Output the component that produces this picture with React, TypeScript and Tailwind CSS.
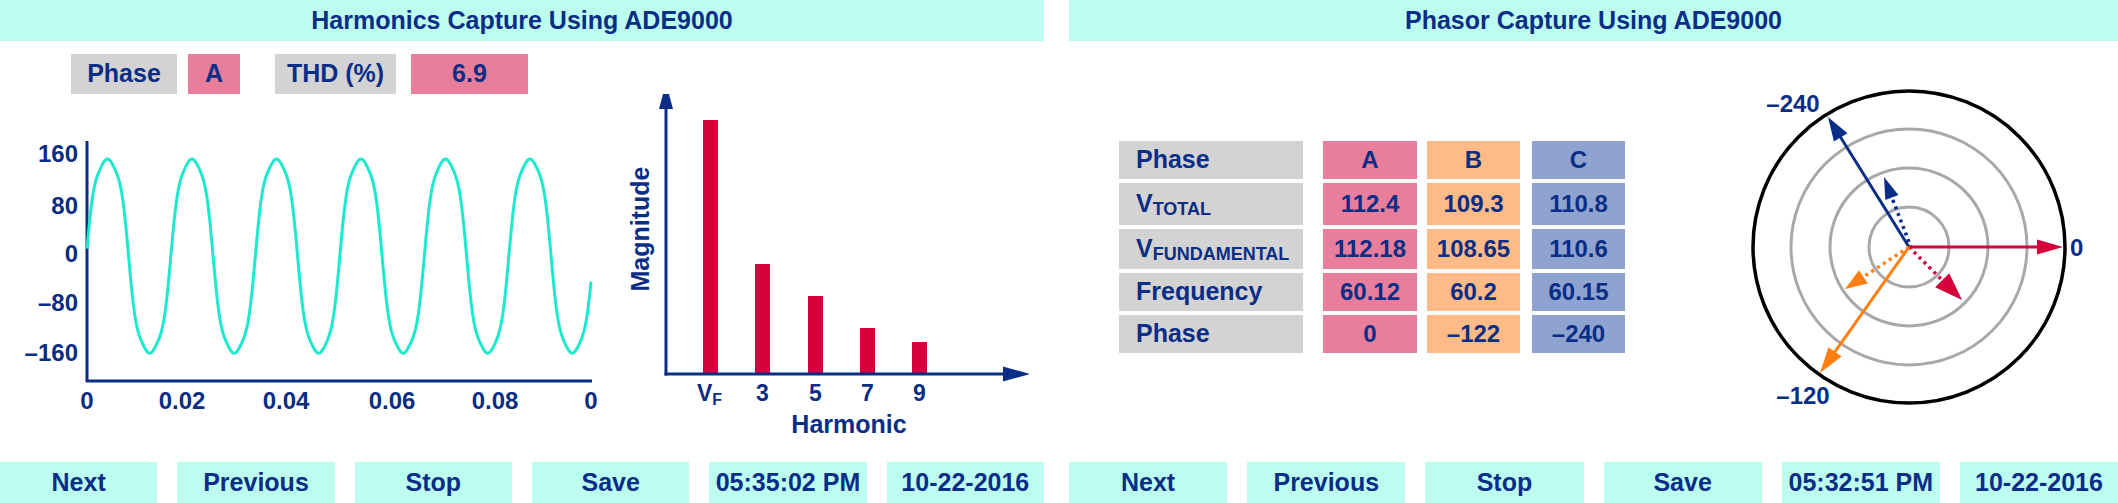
import React from "react";

const NAVY = "#0a2d86";

const buttons = (time: string) => ["Next", "Previous", "Stop", "Save", time, "10-22-2016"];

const ButtonBar: React.FC<{ time: string }> = ({ time }) => (
  <div className="flex h-[41px] gap-[20px]">
    {buttons(time).map((b) => (
      <div
        key={b}
        className="flex flex-1 items-center justify-center bg-[#bdfdef] text-[25px]"
      >
        {b}
      </div>
    ))}
  </div>
);

const Header: React.FC<{ title: string }> = ({ title }) => (
  <div className="flex h-[41px] items-center justify-center bg-[#bdfdef] text-[25px]">
    {title}
  </div>
);

// waveform: axis at x=87, zero at y=253
const wavePoints = () => {
  const pts: string[] = [];
  for (let x = 87; x <= 591; x += 1.5) {
    const t = (2 * Math.PI * (x - 87)) / 84.5 + 0.05;
    const v =
      168 * (Math.sin(t) + 0.1 * Math.sin(3 * t) + 0.03 * Math.sin(5 * t)) - 5;
    pts.push(`${x.toFixed(1)},${(253 - v * 0.622).toFixed(1)}`);
  }
  return pts.join(" ");
};

const WaveChart = () => (
  <svg width={610} height={368} viewBox="0 94 610 368" fill={NAVY}>
    <line x1={87} y1={141} x2={87} y2={382} stroke={NAVY} strokeWidth={3} />
    <line x1={86} y1={381} x2={592} y2={381} stroke={NAVY} strokeWidth={3} />
    <polyline
      points={wavePoints()}
      fill="none"
      stroke="#1de9cf"
      strokeWidth={3}
      strokeLinejoin="round"
    />
    {[
      ["160", 153],
      ["80", 205],
      ["0", 253],
      ["\u201380", 302],
      ["\u2013160", 352],
    ].map(([l, y]) => (
      <text
        key={l as string}
        x={78}
        y={(y as number) + 8.5}
        textAnchor="end"
        fontSize={24}
        fontWeight={700}
      >
        {l}
      </text>
    ))}
    {[
      ["0", 87],
      ["0.02", 182],
      ["0.04", 286],
      ["0.06", 392],
      ["0.08", 495],
      ["0", 591],
    ].map(([l, x], i) => (
      <text
        key={i}
        x={x as number}
        y={408.5}
        textAnchor="middle"
        fontSize={24}
        fontWeight={700}
      >
        {l}
      </text>
    ))}
  </svg>
);

const bars = [
  { x: 703, top: 120, label: "" },
  { x: 755, top: 264, label: "3" },
  { x: 808, top: 296, label: "5" },
  { x: 860, top: 328, label: "7" },
  { x: 912, top: 342, label: "9" },
];

const HarmonicChart = () => (
  <svg width={434} height={368} viewBox="610 94 434 368" fill={NAVY}>
    {bars.map((b) => (
      <rect key={b.x} x={b.x} y={b.top} width={15} height={374 - b.top} fill="#d7003b" />
    ))}
    <line x1={666} y1={106} x2={666} y2={375.5} stroke={NAVY} strokeWidth={3} />
    <polygon points="666,83 659,109 673,109" />
    <line x1={664.5} y1={374} x2={1006} y2={374} stroke={NAVY} strokeWidth={3} />
    <polygon points="1030,374 1003,366.5 1003,381.5" />
    <text x={697} y={401} fontSize={23} fontWeight={700}>
      V
      <tspan fontSize={16} dy={4}>
        F
      </tspan>
    </text>
    {bars.slice(1).map((b) => (
      <text
        key={b.label}
        x={b.x + 7.5}
        y={401}
        textAnchor="middle"
        fontSize={23}
        fontWeight={700}
      >
        {b.label}
      </text>
    ))}
    <text x={849} y={433} textAnchor="middle" fontSize={25} fontWeight={700}>
      Harmonic
    </text>
    <text
      x={0}
      y={0}
      textAnchor="middle"
      fontSize={25}
      fontWeight={700}
      transform="translate(649 229) rotate(-90)"
    >
      Magnitude
    </text>
  </svg>
);

const CX = 1909;
const CY = 247;

const Arrow: React.FC<{
  tx: number;
  ty: number;
  color: string;
  head: number;
  half: number;
  dotted?: boolean;
  ox?: number;
  oy?: number;
}> = ({ tx, ty, color, head, half, dotted, ox = CX, oy = CY }) => {
  const dx = tx - ox;
  const dy = ty - oy;
  const len = Math.hypot(dx, dy);
  const ux = dx / len;
  const uy = dy / len;
  const bx = tx - ux * head;
  const by = ty - uy * head;
  const px = -uy * half;
  const py = ux * half;
  return (
    <g>
      <line
        x1={ox}
        y1={oy}
        x2={bx + ux * 2}
        y2={by + uy * 2}
        stroke={color}
        strokeWidth={dotted ? 3.5 : 3}
        strokeDasharray={dotted ? "3 4" : undefined}
      />
      <polygon
        points={`${tx},${ty} ${bx + px},${by + py} ${bx - px},${by - py}`}
        fill={color}
      />
    </g>
  );
};

const Phasor = () => (
  <svg width={418} height={421} viewBox="1700 41 418 421" fill={NAVY}>
    {[40, 79, 118].map((r) => (
      <circle key={r} cx={CX} cy={CY} r={r} fill="none" stroke="#a8a8a8" strokeWidth={3} />
    ))}
    <circle cx={CX} cy={CY} r={156} fill="none" stroke="#000" strokeWidth={3.5} />
    <Arrow tx={1884} ty={177} color={NAVY} head={22} half={7} dotted ox={CX + 2.5} oy={CY + 1.5} />
    <Arrow tx={1828} ty={117} color={NAVY} head={24} half={8} />
    <Arrow tx={2063} ty={247} color="#d5003b" head={26} half={7.5} />
    <Arrow tx={1962} ty={300} color="#d5003b" head={28} half={10} dotted />
    <Arrow tx={1845} ty={289} color="#ff7f12" head={22} half={8} dotted />
    <Arrow tx={1820} ty={373} color="#ff7f12" head={26} half={8} />
    <text x={1793} y={112} textAnchor="middle" fontSize={24} fontWeight={700}>
      {"\u2013240"}
    </text>
    <text x={2070} y={256} fontSize={24} fontWeight={700}>
      0
    </text>
    <text x={1803} y={404} textAnchor="middle" fontSize={24} fontWeight={700}>
      {"\u2013120"}
    </text>
  </svg>
);

const rows: { label: React.ReactNode; a: string; b: string; c: string; h: string }[] = [
  { label: "Phase", a: "A", b: "B", c: "C", h: "h-[38px]" },
  {
    label: (
      <>
        V<span className="relative top-[5px] text-[18px]">TOTAL</span>
      </>
    ),
    a: "112.4",
    b: "109.3",
    c: "110.8",
    h: "h-[42px]",
  },
  {
    label: (
      <>
        V<span className="relative top-[5px] text-[18px]">FUNDAMENTAL</span>
      </>
    ),
    a: "112.18",
    b: "108.65",
    c: "110.6",
    h: "h-[40px]",
  },
  { label: "Frequency", a: "60.12", b: "60.2", c: "60.15", h: "h-[38px]" },
  { label: "Phase", a: "0", b: "\u2013122", c: "\u2013240", h: "h-[38px]" },
];

const PhaseTable = () => (
  <div className="ml-[50px] mt-[100px] flex flex-col gap-[4px] text-[24px]">
    {rows.map((r, i) => (
      <div key={i} className={`flex ${r.h}`}>
        <div className="flex w-[184px] items-center bg-[#d3d3d3] pl-[17px] text-[25px]">
          {r.label}
        </div>
        <div className="ml-[20px] flex w-[94px] items-center justify-center bg-[#e87e9b]">
          {r.a}
        </div>
        <div className="ml-[10px] flex w-[93px] items-center justify-center bg-[#febb87]">
          {r.b}
        </div>
        <div className="ml-[12px] flex w-[93px] items-center justify-center bg-[#8ea3cf]">
          {r.c}
        </div>
      </div>
    ))}
  </div>
);

export default function App() {
  return (
    <div
      className="flex h-[503px] w-[2118px] gap-[25px] overflow-hidden bg-white font-['Liberation_Sans',Arial,sans-serif] font-bold text-[#0a2d86]"
    >
      <div className="flex w-[1044px] flex-col">
        <Header title="Harmonics Capture Using ADE9000" />
        <div className="flex flex-1 flex-col">
          <div className="ml-[71px] mt-[13px] flex h-[40px] text-[25px]">
            <div className="flex w-[106px] items-center justify-center bg-[#d3d3d3]">Phase</div>
            <div className="ml-[11px] flex w-[52px] items-center justify-center bg-[#e87e9b]">A</div>
            <div className="ml-[35px] flex w-[121px] items-center justify-center bg-[#d3d3d3]">
              THD (%)
            </div>
            <div className="ml-[15px] flex w-[117px] items-center justify-center bg-[#e87e9b]">6.9</div>
          </div>
          <div className="flex">
            <WaveChart />
            <HarmonicChart />
          </div>
        </div>
        <ButtonBar time="05:35:02 PM" />
      </div>
      <div className="flex flex-1 flex-col">
        <Header title="Phasor Capture Using ADE9000" />
        <div className="flex flex-1">
          <PhaseTable />
          <div className="ml-auto">
            <Phasor />
          </div>
        </div>
        <ButtonBar time="05:32:51 PM" />
      </div>
    </div>
  );
}
